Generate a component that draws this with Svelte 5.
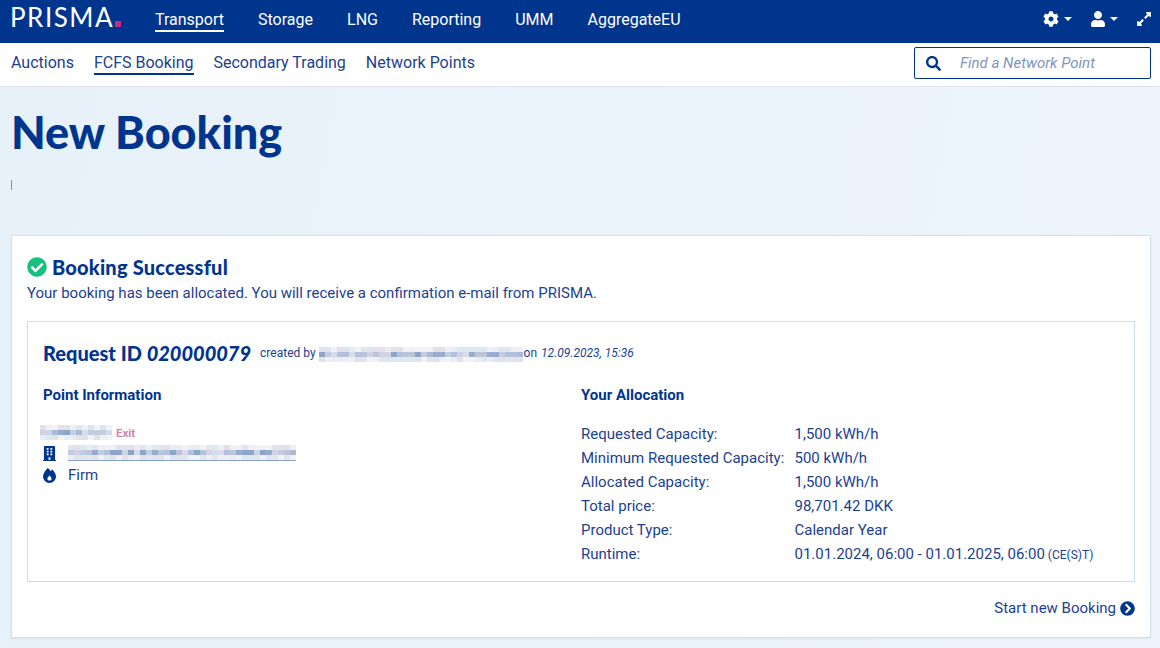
<script>
	const mainNav = ['Transport', 'Storage', 'LNG', 'Reporting', 'UMM', 'AggregateEU'];
	const subNav = ['Auctions', 'FCFS Booking', 'Secondary Trading', 'Network Points'];
	const allocation = [
		['Requested Capacity:', '1,500 kWh/h'],
		['Minimum Requested Capacity:', '500 kWh/h'],
		['Allocated Capacity:', '1,500 kWh/h'],
		['Total price:', '98,701.42 DKK'],
		['Product Type:', 'Calendar Year'],
		['Runtime:', '01.01.2024, 06:00 - 01.01.2025, 06:00']
	];

	// blurred out personal data, drawn as a mosaic of tinted squares
	const light = ['#e8ecf3', '#dfe5ee', '#eef0f5', '#e3e0ea', '#dde9ef', '#f2f3f7'];
	const mid = ['#c3cde0', '#b3c1da', '#a9bbd6', '#cfd3e4', '#98accd', '#bcc6d8', '#d5dcea', '#8ea5c9'];
	function mosaic(cols, rows, seed) {
		const out = [];
		let n = seed;
		for (let i = 0; i < cols * rows; i++) {
			n = (n * 137 + 59) % 1009;
			// the middle row holds most of the ink
			const tints = Math.floor(i / cols) === 1 ? mid : light;
			out.push(tints[n % tints.length]);
		}
		return out;
	}
</script>

<header class="top">
	<div class="logo">PRISMA<span class="dot"></span></div>
	<nav class="main-nav">
		{#each mainNav as item, i}
			<a href="#top" class:active={i === 0}>{item}</a>
		{/each}
	</nav>
	<div class="tools">
		<span class="tool">
			<svg class="ic16" viewBox="0 0 512 512"><path d="M487.4 315.7l-42.6-24.6c4.3-23.2 4.3-47 0-70.2l42.6-24.6c4.9-2.8 7.1-8.6 5.5-14-11.1-35.6-30-67.8-54.7-94.6-3.8-4.1-10-5.1-14.8-2.3L380.8 110c-17.9-15.4-38.5-27.3-60.8-35.1V25.8c0-5.6-3.9-10.5-9.4-11.7-36.7-8.2-74.3-7.8-109.2 0-5.5 1.2-9.4 6.1-9.4 11.7V75c-22.2 7.9-42.8 19.8-60.8 35.1L88.7 85.5c-4.9-2.8-11-1.9-14.8 2.3-24.7 26.7-43.6 58.9-54.7 94.6-1.7 5.4.6 11.2 5.5 14L67.3 221c-4.3 23.2-4.3 47 0 70.2l-42.6 24.6c-4.9 2.8-7.1 8.6-5.5 14 11.1 35.6 30 67.8 54.7 94.6 3.8 4.1 10 5.1 14.8 2.3l42.6-24.6c17.9 15.4 38.5 27.3 60.8 35.1v49.2c0 5.6 3.9 10.5 9.4 11.7 36.7 8.2 74.3 7.8 109.2 0 5.5-1.2 9.4-6.1 9.4-11.7v-49.2c22.2-7.9 42.8-19.8 60.8-35.1l42.6 24.6c4.9 2.8 11 1.9 14.8-2.3 24.7-26.7 43.6-58.9 54.7-94.6 1.5-5.5-.7-11.3-5.6-14.1zM256 336c-44.1 0-80-35.9-80-80s35.9-80 80-80 80 35.9 80 80-35.9 80-80 80z"/></svg>
			<i class="caret"></i>
		</span>
		<span class="tool">
			<svg class="ic14" viewBox="0 0 448 512"><path d="M224 256c70.7 0 128-57.3 128-128S294.7 0 224 0 96 57.3 96 128s57.3 128 128 128zm89.6 32h-16.7c-22.2 10.2-46.9 16-72.9 16s-50.6-5.8-72.9-16h-16.7C60.2 288 0 348.2 0 422.4V464c0 26.5 21.5 48 48 48h352c26.5 0 48-21.5 48-48v-41.6c0-74.2-60.2-134.4-134.4-134.4z"/></svg>
			<i class="caret"></i>
		</span>
		<svg class="ic14" viewBox="0 0 448 512"><path d="M212.686 315.314L120 408l32.922 31.029c15.12 15.12 4.412 40.971-16.97 40.971h-112C10.697 480 0 469.255 0 456V344c0-21.382 25.803-32.09 40.922-16.971L72 360l92.686-92.686c6.248-6.248 16.379-6.248 22.627 0l25.373 25.373c6.249 6.248 6.249 16.378 0 22.627zm22.628-118.628L328 104l-32.922-31.029C279.958 57.851 290.666 32 312.048 32h112C437.303 32 448 42.745 448 56v112c0 21.382-25.803 32.09-40.922 16.971L376 152l-92.686 92.686c-6.248 6.248-16.379 6.248-22.627 0l-25.373-25.373c-6.249-6.248-6.249-16.378 0-22.627z"/></svg>
	</div>
</header>

<div class="sub">
	<nav class="sub-nav">
		{#each subNav as item, i}
			<a href="#top" class:active={i === 1}>{item}</a>
		{/each}
	</nav>
	<label class="search">
		<svg viewBox="0 0 512 512"><path d="M505 442.7L405.3 343c-4.5-4.5-10.6-7-17-7H372c27.6-35.3 44-79.7 44-128C416 93.1 322.9 0 208 0S0 93.1 0 208s93.1 208 208 208c48.3 0 92.7-16.4 128-44v16.3c0 6.4 2.5 12.5 7 17l99.7 99.7c9.4 9.4 24.6 9.4 33.9 0l28.3-28.3c9.4-9.4 9.4-24.6.1-34zM208 336c-70.7 0-128-57.2-128-128 0-70.7 57.2-128 128-128 70.7 0 128 57.2 128 128 0 70.7-57.2 128-128 128z"/></svg>
		<input placeholder="Find a Network Point" />
	</label>
</div>

<main class="page">
	<h1>New Booking</h1>
	<div class="tick"></div>

	<section class="card">
		<h2>
			<svg viewBox="0 0 512 512"><path d="M504 256c0 136.967-111.033 248-248 248S8 392.967 8 256 119.033 8 256 8s248 111.033 248 248zM227.314 387.314l184-184c6.248-6.248 6.248-16.379 0-22.627l-22.627-22.627c-6.248-6.249-16.379-6.249-22.628 0L216 308.118l-70.059-70.059c-6.248-6.248-16.379-6.248-22.628 0l-22.627 22.627c-6.248 6.248-6.248 16.379 0 22.627l104 104c6.249 6.249 16.379 6.249 22.628.001z"/></svg>
			Booking Successful
		</h2>
		<p class="lead">Your booking has been allocated. You will receive a confirmation e-mail from PRISMA.</p>

		<div class="box">
			<div class="request">
				<span class="rid">Request ID <em>020000079</em></span>
				<span class="created">created by</span>
				<span class="blur email">
					{#each mosaic(34, 3, 7) as c}<i style="background:{c}"></i>{/each}
				</span>
				<span class="created">on</span>
				<span class="date">12.09.2023, 15:36</span>
			</div>

			<div class="cols">
				<div>
					<h3>Point Information</h3>
					<div class="point">
						<div class="pname">
							<span class="blur name">
								{#each mosaic(12, 3, 23) as c}<i style="background:{c}"></i>{/each}
							</span>
							<span class="exit">Exit</span>
						</div>
						<div class="pline">
							<svg viewBox="0 0 448 512"><path d="M436 480h-20V24c0-13.255-10.745-24-24-24H56C42.745 0 32 10.745 32 24v456H12c-6.627 0-12 5.373-12 12v20h448v-20c0-6.627-5.373-12-12-12zM128 76c0-6.627 5.373-12 12-12h40c6.627 0 12 5.373 12 12v40c0 6.627-5.373 12-12 12h-40c-6.627 0-12-5.373-12-12V76zm0 96c0-6.627 5.373-12 12-12h40c6.627 0 12 5.373 12 12v40c0 6.627-5.373 12-12 12h-40c-6.627 0-12-5.373-12-12v-40zm52 148h-40c-6.627 0-12-5.373-12-12v-40c0-6.627 5.373-12 12-12h40c6.627 0 12 5.373 12 12v40c0 6.627-5.373 12-12 12zm76 160h-64v-84c0-6.627 5.373-12 12-12h40c6.627 0 12 5.373 12 12v84zm64-172c0 6.627-5.373 12-12 12h-40c-6.627 0-12-5.373-12-12v-40c0-6.627 5.373-12 12-12h40c6.627 0 12 5.373 12 12v40zm0-96c0 6.627-5.373 12-12 12h-40c-6.627 0-12-5.373-12-12v-40c0-6.627 5.373-12 12-12h40c6.627 0 12 5.373 12 12v40zm0-96c0 6.627-5.373 12-12 12h-40c-6.627 0-12-5.373-12-12V76c0-6.627 5.373-12 12-12h40c6.627 0 12 5.373 12 12v40z"/></svg>
							<span class="blur company">
								{#each mosaic(38, 3, 41) as c}<i style="background:{c}"></i>{/each}
							</span>
						</div>
						<div class="pline">
							<svg viewBox="0 0 448 512"><path fill-rule="evenodd" d="M323.56 51.2c-20.8 19.3-39.58 39.59-56.22 59.97C240.08 73.62 206.28 35.53 168 0 69.74 91.17 0 209.96 0 281.6 0 408.85 100.29 512 224 512s224-103.15 224-230.4c0-53.27-51.98-163.14-124.44-230.4zM224 432c-44 0-72-28-72-66 0-30 30-62 72-106 42 44 72 76 72 106 0 38-28 66-72 66z"/></svg>
							<span>Firm</span>
						</div>
					</div>
				</div>
				<div>
					<h3>Your Allocation</h3>
					<dl class="alloc">
						{#each allocation as row, i}
							<dt>{row[0]}</dt>
							<dd>{row[1]}{#if i === 5}<small>(CE(S)T)</small>{/if}</dd>
						{/each}
					</dl>
				</div>
			</div>
		</div>

		<div class="foot">
			<a href="#top">Start new Booking</a>
			<svg viewBox="0 0 512 512"><path d="M256 8c137 0 248 111 248 248S393 504 256 504 8 393 8 256 119 8 256 8zm113.9 231L234.4 103.5c-9.4-9.4-24.6-9.4-33.9 0l-17 17c-9.4 9.4-9.4 24.6 0 33.9L285.1 256 183.5 357.6c-9.4 9.4-9.4 24.6 0 33.9l17 17c9.4 9.4 24.6 9.4 33.9 0L369.9 273c9.4-9.4 9.4-24.6 0-34z"/></svg>
		</div>
	</section>
</main>

<style>
:global(body) {
	margin: 0;
	font-family: Roboto, "Liberation Sans", sans-serif;
	color: #003087;
	background: #fff;
	overflow: hidden;
}

a {
	color: inherit;
	text-decoration: none;
}

svg {
	fill: currentColor;
	display: block;
}

.top {
	height: 43px;
	background: #00358e;
	color: #fff;
	display: flex;
	align-items: center;
	padding: 0 9px 0 10px;
}

.logo {
	font-family: Lato, sans-serif;
	font-size: 26px;
	letter-spacing: 1.5px;
	line-height: 34px;
	width: 145px;
	display: flex;
	align-items: baseline;
	margin-top: -9px;
}

.dot {
	width: 6px;
	height: 6px;
	background: #c62a82;
	margin-left: 1px;
}

.main-nav {
	display: flex;
	gap: 34px;
	font-size: 16px;
	font-weight: 400;
}

.main-nav a {
	padding: 3px 0 1px;
	margin-top: -5px;
	border-bottom: 2px solid transparent;
}

.main-nav a.active {
	border-bottom-color: #fff;
}

.tools {
	margin-left: auto;
	display: flex;
	align-items: center;
	gap: 19px;
	margin-top: -5px;
}

.tool {
	display: flex;
	align-items: center;
	gap: 5px;
}

.ic16 {
	width: 16px;
	height: 16px;
}

.ic14 {
	width: 14px;
	height: 16px;
}

.caret {
	width: 0;
	height: 0;
	border: 4px solid transparent;
	border-top: 4.5px solid #fff;
	border-bottom: 0;
}

.sub {
	height: 44px;
	background: #fff;
	border-bottom: 1px solid #e0e4ea;
	box-sizing: border-box;
	display: flex;
	align-items: center;
	padding: 0 9px 0 11px;
}

.sub-nav {
	display: flex;
	gap: 20px;
	font-size: 16px;
	color: #1c3f8f;
}

.sub-nav a {
	padding: 2px 0 1px;
	margin-top: -3px;
	border-bottom: 2px solid transparent;
}

.sub-nav a.active {
	border-bottom-color: #00358e;
}

.search {
	margin-left: auto;
	width: 237px;
	height: 32px;
	box-sizing: border-box;
	border: 1px solid #00358e;
	border-radius: 2px;
	display: flex;
	align-items: center;
	padding-left: 11px;
	gap: 19px;
	margin-top: -3px;
}

.search svg {
	width: 15px;
	height: 15px;
	color: #00358e;
	flex: none;
}

.search input {
	border: 0;
	outline: 0;
	padding: 0;
	width: 170px;
	font: italic 15px Roboto, sans-serif;
	background: transparent;
}

.search input::placeholder {
	color: #8094c0;
	opacity: 1;
}

.page {
	background: linear-gradient(100deg, #e7f1f9, #eef5fc);
	height: 561px;
	padding: 0 9px 0 11px;
	box-sizing: border-box;
}

h1 {
	margin: 0;
	padding-top: 17px;
	font-family: Lato, sans-serif;
	font-weight: 900;
	font-size: 45px;
	line-height: 56px;
	color: #00358e;
}

.tick {
	width: 1px;
	height: 10px;
	background: #cc7777;
	margin-top: 20px;
	margin-bottom: 45px;
}

.card {
	background: #fff;
	border: 1px solid #cfe2ee;
	box-shadow: 0 1px 2px rgba(0, 53, 142, 0.08);
	padding: 20px 15px 0;
	height: 403px;
	box-sizing: border-box;
}

h2 {
	margin: 0;
	display: flex;
	align-items: center;
	gap: 5px;
	font-family: Lato, sans-serif;
	font-weight: 900;
	font-size: 20px;
	letter-spacing: 0.2px;
	line-height: 22px;
	color: #00358e;
}

h2 svg {
	width: 20px;
	height: 20px;
	color: #16c07f;
}

.lead {
	margin: 5px 0 0;
	font-size: 15px;
	line-height: 20px;
	color: #1c3f8f;
}

.box {
	margin-top: 18px;
	border: 1px solid #c9e0ec;
	height: 261px;
	box-sizing: border-box;
	padding: 19px 15px 0;
}

.request {
	display: flex;
	align-items: center;
	height: 24px;
	color: #1c3f8f;
}

.rid {
	font-family: Lato, sans-serif;
	font-weight: 900;
	font-size: 20px;
	color: #00358e;
	margin-right: 9px;
}

.rid em {
	font-style: italic;
}

.created {
	font-size: 12px;
}

.blur {
	display: grid;
	grid-auto-rows: 6px;
}

.blur i {
	display: block;
}

.email {
	grid-template-columns: repeat(34, 6px);
	grid-auto-rows: 5px;
	margin: 3px 1px 0 3px;
}

.date {
	font-size: 12px;
	font-style: italic;
	margin-left: 4px;
}

.cols {
	display: grid;
	grid-template-columns: 538px 1fr;
	margin-top: 20px;
}

h3 {
	margin: 0;
	font-size: 15px;
	font-weight: 700;
	line-height: 20px;
	color: #00358e;
}

.point {
	margin-top: 18px;
	font-size: 15px;
	color: #1c3f8f;
}

.pname {
	display: flex;
	align-items: center;
	height: 19px;
	margin-left: -3px;
	gap: 4px;
}

.name {
	grid-template-columns: repeat(12, 6px);
	grid-auto-rows: 5px;
}

.exit {
	font-size: 11.5px;
	font-weight: 700;
	color: #cf86ad;
}

.pline {
	display: flex;
	align-items: center;
	height: 22px;
}

.pline svg {
	width: 13px;
	height: 15px;
	color: #00358e;
	margin-right: 12px;
	flex: none;
}

.company {
	grid-template-columns: repeat(38, 6px);
	grid-auto-rows: 5px;
	border-bottom: 1px solid #8ba3c9;
}

.alloc {
	margin: 17px 0 0;
	display: grid;
	grid-template-columns: 213.5px 1fr;
	grid-auto-rows: 24px;
	align-items: center;
	font-size: 15px;
	color: #1c3f8f;
}

.alloc dd {
	margin: 0;
}

.alloc small {
	font-size: 12px;
	margin-left: 3px;
}

.foot {
	margin-top: 16px;
	display: flex;
	justify-content: flex-end;
	align-items: center;
	gap: 4px;
	font-size: 15px;
	line-height: 20px;
	color: #1c3f8f;
}

.foot svg {
	width: 15px;
	height: 15px;
	color: #00358e;
}
</style>
